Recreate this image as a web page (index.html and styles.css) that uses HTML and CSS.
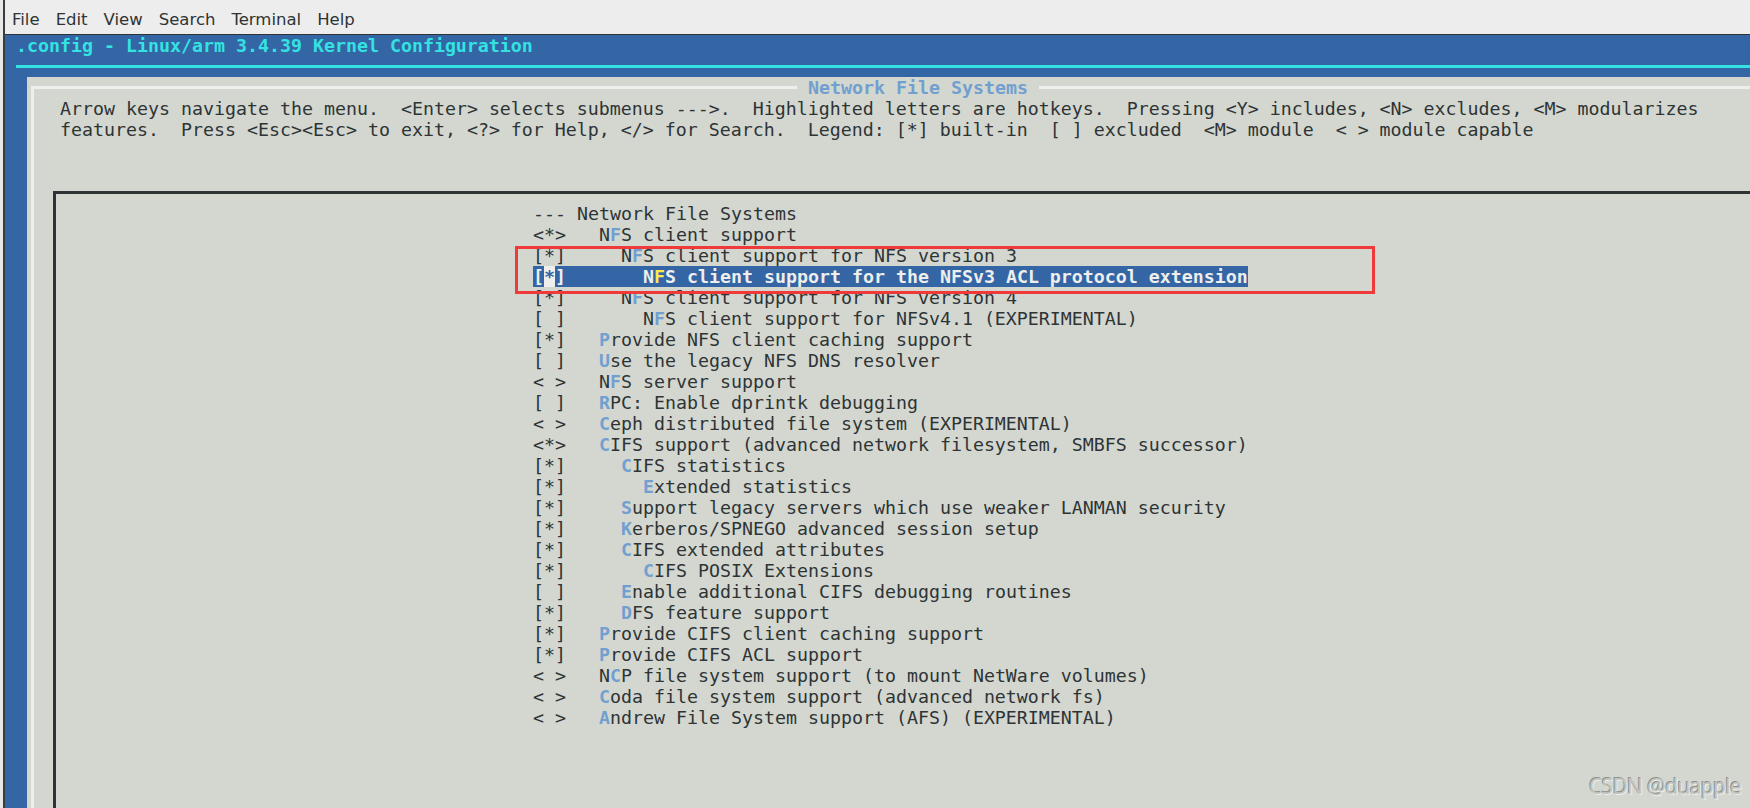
FILE: index.html
```html
<!DOCTYPE html>
<html>
<head>
<meta charset="utf-8">
<title>.config - Linux/arm 3.4.39 Kernel Configuration</title>
<link rel="stylesheet" href="styles.css">
</head>
<body>
<div class="window">
  <nav class="menubar">
    <span class="mi">File</span>
    <span class="mi">Edit</span>
    <span class="mi">View</span>
    <span class="mi">Search</span>
    <span class="mi">Terminal</span>
    <span class="mi">Help</span>
  </nav>
  <div class="term">
    <div class="row backtitle">.config - Linux/arm 3.4.39 Kernel Configuration</div>
    <div class="row hrow"><div class="hline"></div></div>
    <div class="dialog">
      <div class="frame">
        <div class="row dtitle-row"><span class="dtitle"> Network File Systems </span></div>
        <div class="row prompt">Arrow keys navigate the menu.  &lt;Enter&gt; selects submenus ---&gt;.  Highlighted letters are hotkeys.  Pressing &lt;Y&gt; includes, &lt;N&gt; excludes, &lt;M&gt; modularizes</div>
        <div class="row prompt">features.  Press &lt;Esc&gt;&lt;Esc&gt; to exit, &lt;?&gt; for Help, &lt;/&gt; for Search.  Legend: [*] built-in  [ ] excluded  &lt;M&gt; module  &lt; &gt; module capable</div>
        <div class="menubox">
          <div class="row item">--- Network File Systems</div>
          <div class="row item">&lt;*&gt;   N<b class="hk">F</b>S client support</div>
          <div class="row item">[*]     N<b class="hk">F</b>S client support for NFS version 3</div>
          <div class="row item"><span class="sel">[<span class="cur">*</span>]       N<span class="hk-sel">F</span>S client support for the NFSv3 ACL protocol extension</span></div>
          <div class="row item">[*]     N<b class="hk">F</b>S client support for NFS version 4</div>
          <div class="row item">[ ]       N<b class="hk">F</b>S client support for NFSv4.1 (EXPERIMENTAL)</div>
          <div class="row item">[*]   <b class="hk">P</b>rovide NFS client caching support</div>
          <div class="row item">[ ]   <b class="hk">U</b>se the legacy NFS DNS resolver</div>
          <div class="row item">&lt; &gt;   N<b class="hk">F</b>S server support</div>
          <div class="row item">[ ]   <b class="hk">R</b>PC: Enable dprintk debugging</div>
          <div class="row item">&lt; &gt;   <b class="hk">C</b>eph distributed file system (EXPERIMENTAL)</div>
          <div class="row item">&lt;*&gt;   <b class="hk">C</b>IFS support (advanced network filesystem, SMBFS successor)</div>
          <div class="row item">[*]     <b class="hk">C</b>IFS statistics</div>
          <div class="row item">[*]       <b class="hk">E</b>xtended statistics</div>
          <div class="row item">[*]     <b class="hk">S</b>upport legacy servers which use weaker LANMAN security</div>
          <div class="row item">[*]     <b class="hk">K</b>erberos/SPNEGO advanced session setup</div>
          <div class="row item">[*]     <b class="hk">C</b>IFS extended attributes</div>
          <div class="row item">[*]       <b class="hk">C</b>IFS POSIX Extensions</div>
          <div class="row item">[ ]     <b class="hk">E</b>nable additional CIFS debugging routines</div>
          <div class="row item">[*]     <b class="hk">D</b>FS feature support</div>
          <div class="row item">[*]   <b class="hk">P</b>rovide CIFS client caching support</div>
          <div class="row item">[*]   <b class="hk">P</b>rovide CIFS ACL support</div>
          <div class="row item">&lt; &gt;   N<b class="hk">C</b>P file system support (to mount NetWare volumes)</div>
          <div class="row item">&lt; &gt;   <b class="hk">C</b>oda file system support (advanced network fs)</div>
          <div class="row item">&lt; &gt;   <b class="hk">A</b>ndrew File System support (AFS) (EXPERIMENTAL)</div>
        </div>
      </div>
    </div>
  </div>
</div>
<div class="annot"></div>
<div class="watermark">CSDN @duapple</div>
</body>
</html>
```

FILE: styles.css
```css
html, body {
  margin: 0;
  padding: 0;
}
body {
  width: 1750px;
  height: 808px;
  overflow: hidden;
  position: relative;
  background: #e8e8e7;
}
.window {
  margin-left: 3px;
  border-left: 2px solid #3a3d3d;
  height: 808px;
  display: flex;
  flex-direction: column;
}
.menubar {
  height: 34px;
  flex: none;
  border-bottom: 1px solid #2e3436;
  background: #ededed;
  display: flex;
  gap: 16px;
  padding-left: 7px;
  font-family: "DejaVu Sans", sans-serif;
  font-size: 16.5px;
  color: #2e3436;
}
.mi {
  padding-top: 5px;
  line-height: 29px;
}
.term {
  flex: 1;
  background: #3465a4;
  font-family: "DejaVu Sans Mono", monospace;
  font-size: 18.27px;
  line-height: 21px;
  overflow: hidden;
  display: flex;
  flex-direction: column;
}
.row {
  height: 21px;
  white-space: pre;
  flex: none;
}
.backtitle {
  padding-left: 11px;
  color: #34e2e2;
  font-weight: bold;
}
.hrow {
  display: flex;
  align-items: center;
  padding-left: 11px;
}
.hline {
  flex: 1;
  height: 3px;
  background: #34e2e2;
}
.dialog {
  flex: 1;
  margin-left: 22px;
  background: #d3d7cf;
  color: #2e3436;
  display: flex;
  flex-direction: column;
}
.frame {
  flex: 1;
  margin: 9px 0 0 4px;
  border-top: 3px solid #eeeeec;
  border-left: 3px solid #eeeeec;
  display: flex;
  flex-direction: column;
}
.dtitle-row {
  margin-top: -12px;
  padding-left: 763px;
}
.dtitle {
  display: inline-block;
  height: 21px;
  vertical-align: top;
  background: #d3d7cf;
  color: #729fcf;
  font-weight: bold;
}
.prompt {
  padding-left: 26px;
}
.menubox {
  flex: 1;
  margin: 51px 0 0 19px;
  border-top: 3px solid #2e3436;
  border-left: 3px solid #2e3436;
  padding: 9px 0 0 477px;
  display: flex;
  flex-direction: column;
}
.hk {
  color: #729fcf;
  font-weight: bold;
}
.sel {
  display: inline-block;
  height: 21px;
  vertical-align: top;
  background: #3465a4;
  color: #eeeeec;
  font-weight: bold;
}
.cur {
  background: #eeeeec;
  color: #3465a4;
}
.hk-sel {
  color: #fce94f;
}
.annot {
  position: absolute;
  left: 515px;
  top: 246px;
  width: 860px;
  height: 48px;
  box-sizing: border-box;
  border: 3px solid #f03a3a;
}
.watermark {
  position: absolute;
  left: 1589px;
  top: 776px;
  font-family: "Noto Sans", sans-serif;
  font-size: 21px;
  line-height: 1;
  letter-spacing: -0.7px;
  color: #c3c5c0;
  text-shadow: -1px -1px 0 #8f918d, 1px 1px 0 #eceeea;
  white-space: nowrap;
}
```
